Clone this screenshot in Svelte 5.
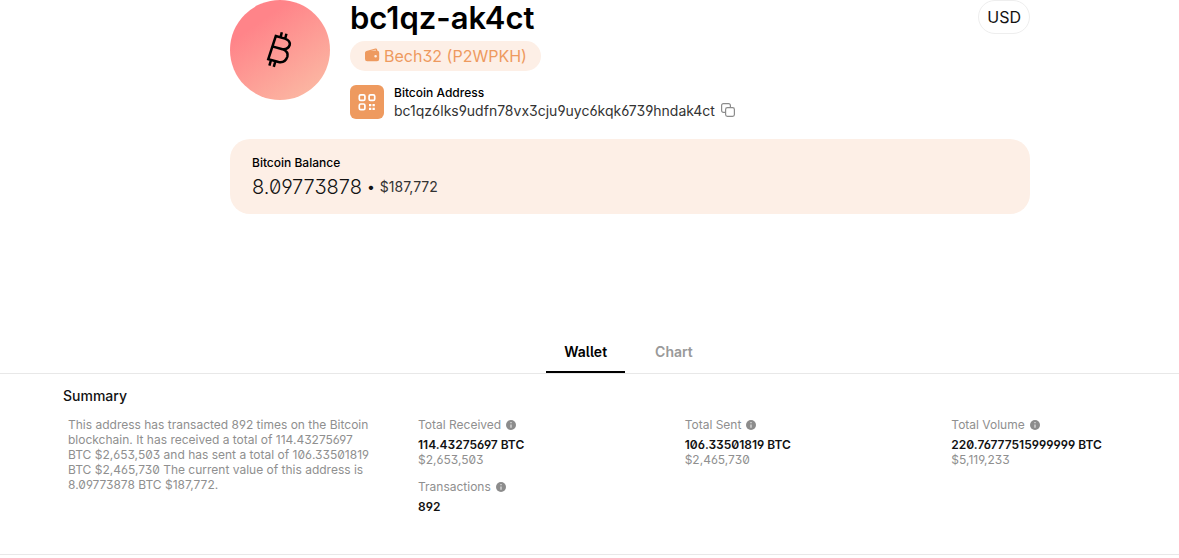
<script>
  const stats = [
    { label: 'Total Received', value: '114.43275697 BTC', fiat: '$2,653,503' },
    { label: 'Total Sent', value: '106.33501819 BTC', fiat: '$2,465,730' },
    { label: 'Total Volume', value: '220.76777515999999 BTC', fiat: '$5,119,233' },
    { label: 'Transactions', value: '892', fiat: '' }
  ];
  const tabs = ['Wallet', 'Chart'];
  let active = $state('Wallet');
  const address = 'bc1qz6lks9udfn78vx3cju9uyc6kqk6739hndak4ct';
</script>

<main>
  <header class="top">
    <div class="profile">
      <div class="avatar">
        <svg width="100" height="100" viewBox="0 0 100 100" fill="none" stroke="#000" stroke-width="2.5" aria-hidden="true">
          <path d="M45.8 36 55 38.6Q60.6 40.6 59.7 45 58 49.8 52.5 49.2 58.6 51.6 57.4 56.6 55.2 63.2 48.5 62L38.3 59.2ZM52.5 49.2 42.2 46.4M51.8 32.3 50.6 37.4M56.4 33.8 55.2 38.6M41 60 39.4 65.6M45.4 61.2 43.8 66.8" />
        </svg>
      </div>
      <div class="identity">
        <h1>bc1qz-ak4ct</h1>
        <span class="badge">
          <svg width="16" height="16" viewBox="0 0 16 16" aria-hidden="true">
            <path fill="#ee9a5f" fill-rule="evenodd" d="M2.4 2.9 11.4.5Q13 .2 13.2 1.8V2.6Q15.2 2.8 15.2 4.8V11Q15.2 13.2 13 13.2H3.2Q1 13.2 1 11V4.8Q1 3.3 2.4 2.9ZM6.6 2.6H12V2Q12 1.6 11.5 1.7ZM11.6 6.9A1.3 1.3 0 0 0 11.6 9.5 1.3 1.3 0 0 0 11.6 6.9Z" />
          </svg>
          Bech32 (P2WPKH)
        </span>
        <div class="address">
          <button class="qr" aria-label="QR code">
            <svg width="34" height="34" viewBox="0 0 34 34" fill="none" stroke="#fff" stroke-width="1.7" aria-hidden="true">
              <rect x="9.3" y="9.8" width="5.6" height="5.6" rx="1.4" />
              <rect x="19.1" y="9.8" width="5.6" height="5.6" rx="1.4" />
              <rect x="9.3" y="19" width="5.6" height="5.6" rx="1.4" />
              <path stroke-width="2.3" d="M19 20.2H21.3M22.5 20.2H24.8M19 23.8H21.3M22.5 23.8H24.8" />
            </svg>
          </button>
          <div>
            <div class="caption">Bitcoin Address</div>
            <div class="hash">
              <span>{address}</span>
              <button class="copy" aria-label="Copy address">
                <svg width="14" height="14" viewBox="0 0 14 14" fill="none" stroke="#8c8c8c" stroke-width="1.2" aria-hidden="true">
                  <rect x="4.6" y="4.6" width="8.8" height="8.8" rx="1.8" />
                  <path d="M4.6 9.4H2.4A1.8 1.8 0 0 1 .6 7.6V2.4A1.8 1.8 0 0 1 2.4.6H7.6A1.8 1.8 0 0 1 9.4 2.4V4.6" />
                </svg>
              </button>
            </div>
          </div>
        </div>
      </div>
      <button class="currency">USD</button>
    </div>
    <section class="balance">
      <div class="caption">Bitcoin Balance</div>
      <div class="amount"><span class="btc">8.09773878</span><span>•</span><span class="fiat">$187,772</span></div>
    </section>
  </header>

  <nav>
    {#each tabs as tab}
      <button class:active={active === tab} onclick={() => (active = tab)}>{tab}</button>
    {/each}
  </nav>

  <section class="summary">
    <h2>Summary</h2>
    <div class="columns">
      <p>
        This address has transacted 892 times on the Bitcoin blockchain. It has received a total of 114.43275697 BTC $2,653,503 and has sent a total of 106.33501819 BTC $2,465,730 The current value of this address is 8.09773878 BTC $187,772.
      </p>
      <dl>
        {#each stats as s}
          <div class="stat">
            <dt>
              {s.label}
              <svg width="10" height="10" viewBox="0 0 10 10" aria-hidden="true">
                <circle cx="5" cy="5" r="5" fill="#8c8c8c" />
                <path d="M5 2.1V3.3M5 4.4V7.8" stroke="#e4e4e4" stroke-width="1.2" />
              </svg>
            </dt>
            <dd class="value">{s.value}</dd>
            {#if s.fiat}<dd>{s.fiat}</dd>{/if}
          </div>
        {/each}
      </dl>
    </div>
  </section>
</main>

<style>
  :global(body) {
    margin: 0;
    background: #fff;
  }
  main {
    font-family: Inter, sans-serif;
    font-feature-settings: 'zero', 'cv03', 'cv04', 'cv09';
    font-size: 12px;
    line-height: 15px;
    color: #121212;
  }
  button {
    font: inherit;
    font-feature-settings: inherit;
    color: inherit;
    border: 0;
    padding: 0;
    background: none;
    cursor: pointer;
  }
  svg {
    display: block;
    flex: none;
  }
  h1, h2, p, dl, dd {
    margin: 0;
  }
  .top {
    padding-left: 81px;
  }
  .profile, .balance {
    max-width: 800px;
    margin: 0 auto;
    box-sizing: border-box;
  }
  .profile {
    display: flex;
    align-items: flex-start;
    gap: 20px;
  }
  .avatar {
    border-radius: 50%;
    background: linear-gradient(145deg, #ff8489 25%, #fbbca5 95%);
  }
  .identity {
    flex: 1;
    display: flex;
    flex-direction: column;
    align-items: flex-start;
  }
  h1 {
    font-size: 31px;
    line-height: 36px;
    font-weight: 600;
    color: #000;
    margin-bottom: 5px;
  }
  .badge {
    display: flex;
    align-items: center;
    gap: 4px;
    height: 30px;
    padding: 0 14px;
    border-radius: 15px;
    background: #fdefe6;
    color: #ee9a5f;
    font-size: 16px;
    margin-bottom: 14px;
  }
  .address {
    display: flex;
    gap: 10px;
  }
  .qr {
    width: 34px;
    height: 34px;
    border-radius: 6px;
    background: #ee9a5f;
  }
  .caption {
    font-weight: 500;
    color: #000;
  }
  .hash {
    display: flex;
    align-items: center;
    gap: 6px;
    font-size: 14px;
    line-height: 22px;
    color: #333;
  }
  .copy svg {
    margin-bottom: 3px;
  }
  .currency {
    height: 34px;
    padding: 0 8px;
    border: 1px solid #eee;
    border-radius: 17px;
    font-size: 16px;
  }
  .balance {
    margin-top: 17px;
    padding: 16px 22px;
    height: 75px;
    border-radius: 20px;
    background: #fdefe6;
  }
  .amount {
    display: flex;
    align-items: center;
    gap: 5px;
    margin-top: 4px;
    font-size: 14px;
    line-height: 26px;
  }
  .btc {
    font-size: 20px;
    font-weight: 300;
  }
  .fiat {
    color: #333;
  }
  nav {
    display: flex;
    justify-content: center;
    gap: 12px;
    margin-top: 118px;
    padding-left: 78px;
    border-bottom: 1px solid #e8e8e8;
  }
  nav button {
    height: 41px;
    padding: 0 18px;
    border-bottom: 2px solid transparent;
    font-size: 14px;
    font-weight: 600;
    color: #999;
    font-feature-settings: 'cv05';
  }
  nav button.active {
    color: #000;
    border-color: #000;
  }
  .summary {
    padding: 12px 0 40px 63px;
    border-bottom: 1px solid #e8e8e8;
  }
  h2 {
    font-size: 14px;
    line-height: 20px;
    font-weight: 500;
  }
  .columns {
    display: grid;
    grid-template-columns: 305px 1fr;
    gap: 45px;
    padding: 11px 0 0 5px;
    color: #8f8f8f;
  }
  dl {
    display: grid;
    grid-template-columns: repeat(3, 1fr);
    row-gap: 12px;
    margin-right: -39px;
  }
  dt {
    display: flex;
    align-items: center;
    gap: 5px;
    margin-bottom: 5px;
  }
  .value {
    color: #121212;
    font-weight: 600;
  }
</style>
